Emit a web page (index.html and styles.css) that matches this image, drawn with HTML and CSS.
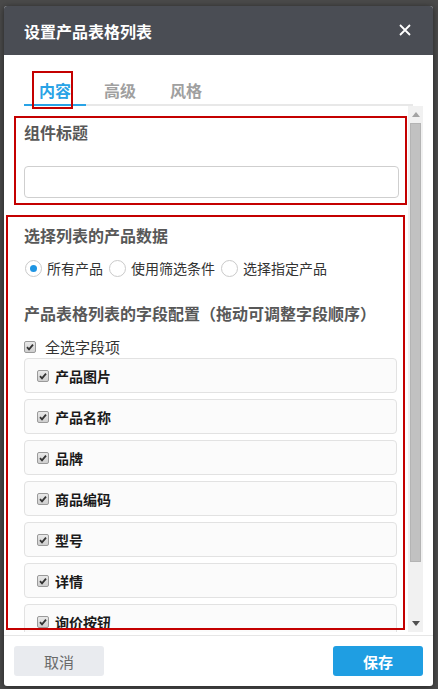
FILE: index.html
```html
<!DOCTYPE html>
<html lang="zh-CN">
<head>
<meta charset="utf-8">
<title>设置产品表格列表</title>
<link rel="stylesheet" href="styles.css">
</head>
<body>
<div class="dialog">
  <div class="dlg-head">
    <span class="dlg-title">设置产品表格列表</span>
    <svg class="dlg-close" width="12" height="12" viewBox="0 0 12 12"><path d="M1 1L11 11M11 1L1 11" stroke="#fff" stroke-width="1.8" fill="none"/></svg>
  </div>
  <div class="tabs">
    <span class="tab active">内容</span>
    <span class="tab">高级</span>
    <span class="tab">风格</span>
  </div>
  <div class="scroll">
    <div class="content">
      <div class="sec-title first">组件标题</div>
      <div class="input"></div>
      <div class="sec-title second">选择列表的产品数据</div>
      <div class="radios">
        <span class="radio on"></span><span class="rlabel">所有产品</span>
        <span class="radio"></span><span class="rlabel">使用筛选条件</span>
        <span class="radio"></span><span class="rlabel">选择指定产品</span>
      </div>
      <div class="sec-title third">产品表格列表的字段配置（拖动可调整字段顺序）</div>
      <div class="allsel"><span class="cb"><svg width="10" height="10" viewBox="0 0 10 10"><path d="M2 5.2L4 7.3L8 2.6" stroke="#333" stroke-width="1.8" fill="none"/></svg></span><span class="alllabel">全选字段项</span></div>
      <div class="rows">
        <div class="row"><span class="cb"><svg width="10" height="10" viewBox="0 0 10 10"><path d="M2 5.2L4 7.3L8 2.6" stroke="#333" stroke-width="1.8" fill="none"/></svg></span><span class="rowlabel">产品图片</span></div>
        <div class="row"><span class="cb"><svg width="10" height="10" viewBox="0 0 10 10"><path d="M2 5.2L4 7.3L8 2.6" stroke="#333" stroke-width="1.8" fill="none"/></svg></span><span class="rowlabel">产品名称</span></div>
        <div class="row"><span class="cb"><svg width="10" height="10" viewBox="0 0 10 10"><path d="M2 5.2L4 7.3L8 2.6" stroke="#333" stroke-width="1.8" fill="none"/></svg></span><span class="rowlabel">品牌</span></div>
        <div class="row"><span class="cb"><svg width="10" height="10" viewBox="0 0 10 10"><path d="M2 5.2L4 7.3L8 2.6" stroke="#333" stroke-width="1.8" fill="none"/></svg></span><span class="rowlabel">商品编码</span></div>
        <div class="row"><span class="cb"><svg width="10" height="10" viewBox="0 0 10 10"><path d="M2 5.2L4 7.3L8 2.6" stroke="#333" stroke-width="1.8" fill="none"/></svg></span><span class="rowlabel">型号</span></div>
        <div class="row"><span class="cb"><svg width="10" height="10" viewBox="0 0 10 10"><path d="M2 5.2L4 7.3L8 2.6" stroke="#333" stroke-width="1.8" fill="none"/></svg></span><span class="rowlabel">详情</span></div>
        <div class="row"><span class="cb"><svg width="10" height="10" viewBox="0 0 10 10"><path d="M2 5.2L4 7.3L8 2.6" stroke="#333" stroke-width="1.8" fill="none"/></svg></span><span class="rowlabel">询价按钮</span></div>
      </div>
    </div>
    <div class="sbar">
      <div class="sbtn"><svg width="8" height="5" viewBox="0 0 8 5"><path d="M0 5L4 0L8 5Z" fill="#a3a3a3"/></svg></div>
      <div class="sthumb"></div>
      <div class="sspace"></div>
      <div class="sbtn"><svg width="8" height="5" viewBox="0 0 8 5"><path d="M0 0L8 0L4 5Z" fill="#505050"/></svg></div>
    </div>
  </div>
  <div class="dlg-foot">
    <span class="btn cancel">取消</span>
    <span class="btn save">保存</span>
  </div>
</div>
<div class="mark mark-tab"></div>
<div class="mark mark-one"></div>
<div class="mark mark-two"></div>
</body>
</html>
```
FILE: styles.css
```css
html, body {
  margin: 0;
  padding: 0;
}
body {
  background: #4a4a4a;
  width: 438px;
  height: 689px;
  overflow: hidden;
  font-family: "Noto Sans CJK SC", "Microsoft YaHei", sans-serif;
  position: relative;
}
.dialog {
  margin: 6px 0 0 4px;
  width: 429px;
  height: 680px;
  background: #fff;
  border-radius: 3px;
  overflow: hidden;
  display: flex;
  flex-direction: column;
  box-shadow: 0 1px 6px rgba(0,0,0,0.5);
}
.dlg-head {
  height: 49px;
  flex: none;
  background: #4a4d54;
  display: flex;
  align-items: center;
  justify-content: space-between;
  padding: 0 22px 0 20px;
}
.dlg-title {
  color: #fff;
  font-size: 16px;
  font-weight: 700;
  line-height: 22px;
}
.dlg-close {
  display: block;
  margin-top: -1px;
}
.tabs {
  flex: none;
  margin: 0 20px;
  padding-top: 24px;
  display: flex;
  border-bottom: 2px solid #e8e8e8;
}
.tab {
  display: block;
  width: 62px;
  text-align: center;
  font-size: 16px;
  font-weight: 700;
  line-height: 22px;
  padding-bottom: 3px;
  margin-bottom: -2px;
  border-bottom: 2px solid transparent;
  color: #a0a0a0;
}
.tab + .tab {
  width: 64px;
  margin-left: 2px;
}
.tab.active {
  color: #29a3e6;
  border-bottom-color: #29a3e6;
}
.scroll {
  height: 526px;
  flex: none;
  display: flex;
  margin-right: 10px;
}
.content {
  flex: 1;
  overflow: hidden;
  padding: 0 9px 0 20px;
}
.sec-title {
  font-size: 16px;
  font-weight: 700;
  line-height: 22px;
  color: #585858;
}
.sec-title.first { margin-top: 15px; }
.sec-title.second { margin-top: 26px; }
.sec-title.third { margin-top: 23px; }
.input {
  margin-top: 23px;
  height: 30px;
  border: 1px solid #cfcfcf;
  border-radius: 4px;
}
.radios {
  margin-top: 11px;
  height: 22px;
  display: flex;
  align-items: center;
}
.radio {
  box-sizing: border-box;
  width: 17px;
  height: 17px;
  border: 1px solid #cacaca;
  border-radius: 50%;
  background: #fff;
  display: flex;
  align-items: center;
  justify-content: center;
  margin-left: 1px;
}
.radio.on::after {
  content: "";
  width: 7px;
  height: 7px;
  border-radius: 50%;
  background: #1f95e3;
}
.rlabel {
  font-size: 14px;
  color: #333;
  line-height: 22px;
  margin: 0 5px 0 5px;
}
.allsel {
  margin-top: 13px;
  height: 20px;
  display: flex;
  align-items: center;
}
.cb {
  box-sizing: border-box;
  width: 12px;
  height: 12px;
  border: 1px solid #9a9a9a;
  border-radius: 2px;
  background: linear-gradient(#e9e9e9, #cfcfcf);
  display: flex;
  align-items: center;
  justify-content: center;
  flex: none;
}
.cb svg { display: block; }
.alllabel {
  margin-left: 9px;
  font-size: 15px;
  color: #333;
  line-height: 20px;
}
.rows {
  margin-top: 1px;
  display: flex;
  flex-direction: column;
  gap: 6px;
  padding-right: 2px;
}
.row {
  box-sizing: border-box;
  height: 35px;
  border: 1px solid #e2e2e2;
  border-radius: 4px;
  background: #fbfbfb;
  display: flex;
  align-items: center;
  padding-left: 12px;
}
.rowlabel {
  margin-left: 6px;
  font-size: 14px;
  font-weight: 700;
  color: #1a1a1a;
  line-height: 20px;
}
.sbar {
  width: 15px;
  flex: none;
  background: #f1f1f1;
  display: flex;
  flex-direction: column;
  align-items: center;
}
.sbtn {
  height: 17px;
  flex: none;
  display: flex;
  align-items: center;
  justify-content: center;
}
.sbtn svg { display: block; }
.sthumb {
  width: 11px;
  height: 439px;
  flex: none;
  background: #c1c1c1;
  box-sizing: border-box;
  border: 1px solid #b4b4b4;
}
.sspace { flex: 1; }
.dlg-foot {
  flex: 1;
  margin-top: 3px;
  border-top: 1px solid #e6e6e6;
  padding: 10px 10px 0 10px;
  display: flex;
  justify-content: space-between;
  align-items: flex-start;
}
.btn {
  width: 90px;
  height: 30px;
  border-radius: 3px;
  display: flex;
  align-items: center;
  justify-content: center;
  font-size: 15px;
}
.cancel {
  background: #e9ebef;
  color: #6a6a6a;
}
.save {
  background: #1f9ee2;
  color: #fff;
  font-weight: 700;
}
.mark {
  position: absolute;
  border: 2px solid #c40000;
  box-sizing: border-box;
}
.mark-tab { left: 32px; top: 71px; width: 41px; height: 38px; }
.mark-one { left: 14px; top: 116px; width: 393px; height: 89px; }
.mark-two { left: 6px; top: 215px; width: 399px; height: 415px; }
```
